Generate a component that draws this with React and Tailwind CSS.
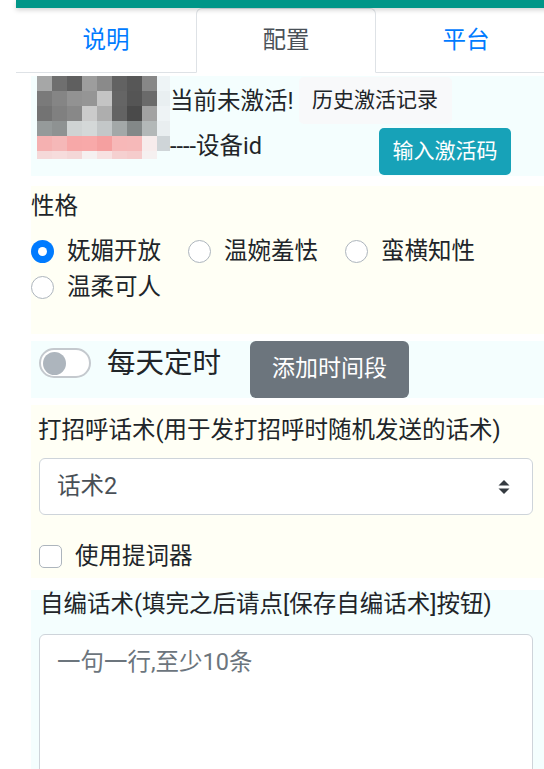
import React, { useState } from 'react'

const avatarCells = [
  'bg-[#a6a7a7]', 'bg-[#6f6f6f]', 'bg-[#5f5f5f]', 'bg-[#9d9d9d]', 'bg-[#8a8a8a]', 'bg-[#626262]', 'bg-[#575757]', 'bg-[#878787]', 'bg-[#eef4f6]',
  'bg-[#7a7a7a]', 'bg-[#858585]', 'bg-[#929292]', 'bg-[#959595]', 'bg-[#c4c4c4]', 'bg-[#656565]', 'bg-[#555555]', 'bg-[#6a6a6a]', 'bg-[#e9eff1]',
  'bg-[#737373]', 'bg-[#808080]', 'bg-[#888888]', 'bg-[#cbcbcb]', 'bg-[#aeaeae]', 'bg-[#636363]', 'bg-[#4a4a4a]', 'bg-[#a2a2a2]', 'bg-[#eef3f5]',
  'bg-[#959a9a]', 'bg-[#8e9292]', 'bg-[#cfd3d3]', 'bg-[#d4d8d8]', 'bg-[#c3c7c8]', 'bg-[#a3a8a8]', 'bg-[#838888]', 'bg-[#b3b8b8]', 'bg-[#e9eef0]',
  'bg-[#f5b1b1]', 'bg-[#f5b8b8]', 'bg-[#f7a8a8]', 'bg-[#f8a9a9]', 'bg-[#f5a0a0]', 'bg-[#f7b8b8]', 'bg-[#f6b9b9]', 'bg-[#f7ecec]', 'bg-[#cfd5d8]',
]
const avatarLastRow = [
  'bg-[#f5d9d9]', 'bg-[#f6dcdc]', 'bg-[#f4d7d7]', 'bg-[#f5f0f0]', 'bg-[#f7e1e1]', 'bg-[#f5d0d0]', 'bg-[#f5cccc]', 'bg-[#f5f0f0]', 'bg-transparent',
]

const tabs = ['说明', '配置', '平台']
const personalities = ['妩媚开放', '温婉羞怯', '蛮横知性', '温柔可人']

const Radio = ({ checked }) => (
  checked
    ? <span className='w-[23px] h-[23px] rounded-full bg-[#007bff] flex items-center justify-center shrink-0'>
        <span className='w-[9px] h-[9px] rounded-full bg-white' />
      </span>
    : <span className='w-[23px] h-[23px] rounded-full bg-white border border-[#adb5bd] shrink-0' />
)

const App = () => {
  const [activeTab, setActiveTab] = useState(1)
  const [personality, setPersonality] = useState(0)

  return (
    <div className='w-[544px] min-h-screen bg-white overflow-hidden text-[#212529]' style={{ fontFamily: "Roboto, 'Noto Sans CJK SC', sans-serif" }}>
      <div className='ml-[16px] w-[540px]'>
        <div className='relative z-10 h-[8px] bg-[#009688] shadow-[0_2px_5px_rgba(0,0,0,0.18)]' />

        {/* tabs */}
        <div className='flex border-b border-[#dee2e6]'>
          {tabs.map((t, i) => (
            <div
              key={t}
              onClick={() => setActiveTab(i)}
              className={i === activeTab
                ? 'flex-1 h-[65px] -mb-px flex items-center justify-center text-[23.5px] text-[#495057] bg-white border border-[#dee2e6] border-b-white rounded-t-[6px]'
                : 'flex-1 h-[65px] -mb-px flex items-center justify-center text-[23.5px] text-[#007bff] border border-transparent'}
            >
              {t}
            </div>
          ))}
        </div>

        {/* activation */}
        <div className='ml-[15px] mt-[3px] flex bg-[#f4fefe] pl-[6px] h-[100px]'>
          <div className='w-[133px] h-[83px] overflow-hidden shrink-0'>
            <div className='w-[135px] flex flex-wrap'>
              {avatarCells.map((c, i) => <div key={i} className={`w-[15px] h-[15px] ${c}`} />)}
              {avatarLastRow.map((c, i) => <div key={'l' + i} className={`w-[15px] h-[8px] ${c}`} />)}
            </div>
          </div>
          <div className='w-[341px] flex flex-col'>
            <div className='flex items-center mt-[1px]'>
              <span className='text-[23.5px] leading-[34px]'>当前未激活!</span>
              <button className='ml-[5px] w-[153px] h-[47px] rounded-[5px] bg-[#f8f9fa] text-[21px] text-[#212529]'>历史激活记录</button>
            </div>
            <div className='flex items-start mt-[4px]'>
              <span className='mt-[1px] text-[23.5px] leading-[34px]'>----设备id</span>
              <button className='ml-auto w-[132px] h-[47px] rounded-[5px] bg-[#17a2b8] text-[21px] text-white'>输入激活码</button>
            </div>
          </div>
        </div>

        {/* personality */}
        <div className='ml-[15px] mt-[10px] bg-[#fffff5] pt-[3px] h-[148px]'>
          <div className='text-[23.5px] leading-[34px]'>性格</div>
          <div className='mt-[10px] flex flex-wrap'>
            {personalities.map((p, i) => (
              <label key={p} onClick={() => setPersonality(i)} className='h-[36px] mr-[26px] flex items-center gap-[13px]'>
                <Radio checked={personality === i} />
                <span className='text-[23.5px] leading-[34px] w-[95px]'>{p}</span>
              </label>
            ))}
          </div>
        </div>

        {/* daily timer */}
        <div className='ml-[15px] mt-[7px] h-[57px] bg-[#f4fefe] pl-[8px] flex items-start'>
          <div className='mt-[7px] w-[52px] h-[30px] rounded-full border-2 border-[#c4c9ce] bg-white flex items-center pl-[2px]'>
            <span className='w-[23px] h-[23px] rounded-full bg-[#adb5bd]' />
          </div>
          <span className='ml-[16px] mt-[1px] text-[28.5px] leading-[43px]'>每天定时</span>
          <button className='ml-[29px] w-[159px] h-[57px] rounded-[6px] bg-[#6c757d] text-white text-[23px]'>添加时间段</button>
        </div>

        {/* greeting */}
        <div className='ml-[15px] mt-[7px] bg-[#fffff5] pl-[8px] pt-[8px] pb-[4px]'>
          <div className='text-[23.5px] leading-[35px] -ml-[1px]'>打招呼话术(用于发打招呼时随机发送的话术)</div>
          <div className='mt-[10px] w-[494px] h-[57px] border border-[#ced4da] rounded-[6px] bg-white flex items-center pl-[17px] pr-[22px]'>
            <span className='flex-1 text-[23.5px] text-[#495057]'>话术2</span>
            <svg width='12' height='18' viewBox='0 0 12 18'>
              <path d='M6 2 L11.5 7.5 L0.5 7.5 Z' fill='#343a40' />
              <path d='M6 16 L11.5 10.5 L0.5 10.5 Z' fill='#343a40' />
            </svg>
          </div>
          <label className='mt-[24px] h-[35px] flex items-center gap-[13px]'>
            <span className='w-[23px] h-[23px] rounded-[5px] border border-[#adb5bd] bg-white' />
            <span className='text-[23.5px] leading-[35px]'>使用提词器</span>
          </label>
        </div>

        {/* custom scripts */}
        <div className='ml-[15px] mt-[12px] bg-[#f4fefe] pl-[8px] pb-[20px]'>
          <div className='text-[23.5px] leading-[28px] ml-[1px]'>自编话术(填完之后请点[保存自编话术]按钮)</div>
          <div className='mt-[16px] w-[494px] h-[220px] border border-[#ced4da] rounded-[6px] bg-white pl-[17px] pt-[10px]'>
            <span className='text-[23.5px] leading-[35px] text-[#6c757d]'>一句一行,至少10条</span>
          </div>
        </div>
      </div>
    </div>
  )
}

export default App
